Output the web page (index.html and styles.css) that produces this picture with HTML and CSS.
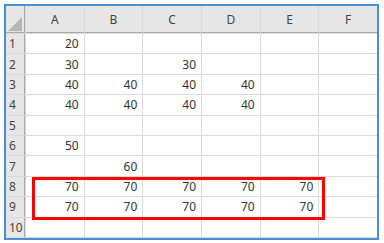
FILE: index.html
```html
<!DOCTYPE html>
<html lang="en">
<head>
    <meta charset="UTF-8">
    <meta name="viewport" content="width=device-width, initial-scale=1.0">
    <title>Sheet1</title>
    <link rel="stylesheet" href="styles.css">
</head>
<body>
    <div class="sheet">
        <div class="grid">
            <div class="corner"><span class="corner-mark"></span></div>
            <div class="col-head">A</div>
            <div class="col-head">B</div>
            <div class="col-head">C</div>
            <div class="col-head">D</div>
            <div class="col-head">E</div>
            <div class="col-head">F</div>

            <div class="row-head">1</div>
            <div class="cell">20</div><div class="cell"></div><div class="cell"></div><div class="cell"></div><div class="cell"></div><div class="cell"></div>

            <div class="row-head">2</div>
            <div class="cell">30</div><div class="cell"></div><div class="cell">30</div><div class="cell"></div><div class="cell"></div><div class="cell"></div>

            <div class="row-head">3</div>
            <div class="cell">40</div><div class="cell">40</div><div class="cell">40</div><div class="cell">40</div><div class="cell"></div><div class="cell"></div>

            <div class="row-head">4</div>
            <div class="cell">40</div><div class="cell">40</div><div class="cell">40</div><div class="cell">40</div><div class="cell"></div><div class="cell"></div>

            <div class="row-head">5</div>
            <div class="cell"></div><div class="cell"></div><div class="cell"></div><div class="cell"></div><div class="cell"></div><div class="cell"></div>

            <div class="row-head">6</div>
            <div class="cell">50</div><div class="cell"></div><div class="cell"></div><div class="cell"></div><div class="cell"></div><div class="cell"></div>

            <div class="row-head">7</div>
            <div class="cell"></div><div class="cell">60</div><div class="cell"></div><div class="cell"></div><div class="cell"></div><div class="cell"></div>

            <div class="row-head">8</div>
            <div class="cell">70</div><div class="cell">70</div><div class="cell">70</div><div class="cell">70</div><div class="cell">70</div><div class="cell"></div>

            <div class="row-head">9</div>
            <div class="cell">70</div><div class="cell">70</div><div class="cell">70</div><div class="cell">70</div><div class="cell">70</div><div class="cell"></div>

            <div class="row-head">10</div>
            <div class="cell"></div><div class="cell"></div><div class="cell"></div><div class="cell"></div><div class="cell"></div><div class="cell"></div>
        </div>
        <!-- highlight around rows 8-9 -->
        <div class="highlight"></div>
    </div>
</body>
</html>
```

FILE: styles.css
```css
body {
    margin: 4px;
    background: #fff;
    font-family: "Noto Sans", "Liberation Sans", sans-serif;
}
.sheet {
    position: relative;
    width: 371px;
    height: 232px;
    border: 2px solid #4a8fd4;
    background: #dadada;
}
.grid {
    display: grid;
    grid-template-columns: 19px repeat(6, 1fr);
    grid-template-rows: 27px repeat(10, 1fr);
    gap: 1px;
    height: 231px;
}
.corner {
    position: relative;
    background: #e6e6e6;
    box-shadow: inset 0 -1px #a9a9a9, inset -1px 0 #a9a9a9;
}
.corner-mark {
    position: absolute;
    right: 3px;
    bottom: 2px;
    width: 0;
    height: 0;
    border-left: 14px solid transparent;
    border-bottom: 14px solid #b5b5b5;
}
.col-head {
    display: flex;
    align-items: center;
    justify-content: center;
    background: #e6e6e6;
    box-shadow: inset 0 -1px #a9a9a9;
    color: #444;
    font-size: 12px;
}
.row-head {
    display: flex;
    align-items: center;
    padding-left: 3px;
    background: #e6e6e6;
    box-shadow: inset -1px 0 #a9a9a9;
    color: #444;
    font-size: 12px;
}
.cell {
    display: flex;
    align-items: center;
    justify-content: flex-end;
    padding-right: 5px;
    background: #fff;
    color: #333;
    font-size: 12px;
}
.highlight {
    position: absolute;
    left: 26px;
    top: 171px;
    width: 293px;
    height: 43px;
    box-sizing: border-box;
    border: 3px solid #f00;
}
```
